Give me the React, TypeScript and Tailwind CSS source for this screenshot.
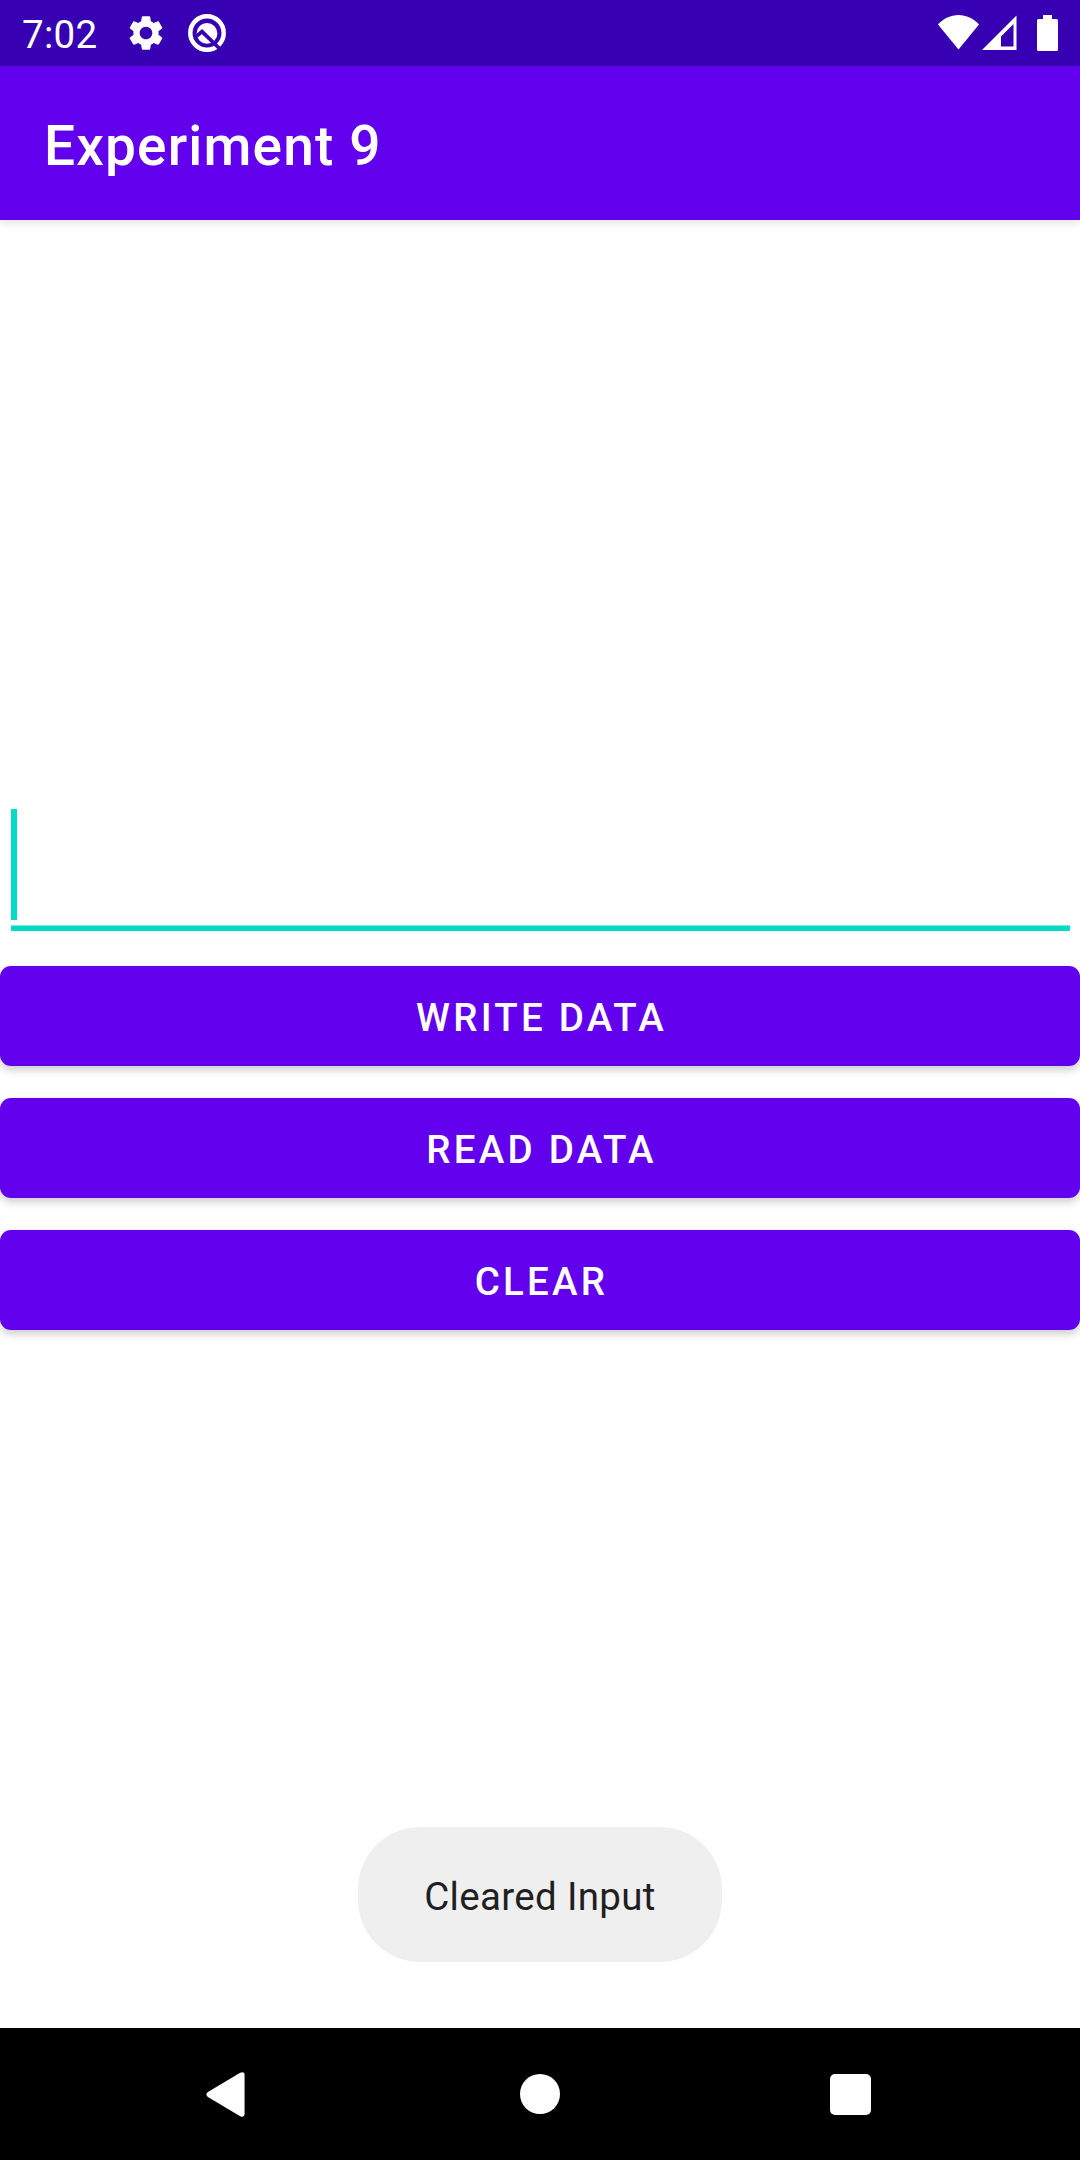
import React from "react";
import { MdSettings } from "react-icons/md";

function StatusBar() {
  return (
    <header className="flex h-[66px] shrink-0 items-center bg-[#3700b3] text-white">
      <span className="mt-[3px] ml-[22px] w-[103px] text-[38.5px] leading-[45px] tracking-[0.3px]">7:02</span>
      <MdSettings className="h-[42px] w-[42px]" />
      <svg className="ml-[21px] h-[38px] w-[38px]" viewBox="0 0 38 38" fill="none">
        <circle cx="19" cy="19" r="16.7" stroke="white" strokeWidth="4.5" />
        <circle cx="19" cy="19.400" r="10.4" fill="white" />
        <path d="M8 22.600 14 17.600 32.500 35.500" stroke="#3700b3" strokeWidth="3.700" />
      </svg>
      <div className="mr-[22px] ml-auto flex items-center">
        <svg className="h-9 w-[41px]" viewBox="0 0 41 36" fill="white">
          <path d="M0 9.500C5.500 3.500 12.800 0 20.500 0S35.500 3.500 41 9.500L20.500 34.500Z" />
        </svg>
        <svg className="ml-[3px] h-9 w-[35px]" viewBox="0 0 35 36" fill="white">
          <path fillRule="evenodd" d="M34.500 .5v34.500H0ZM31.500 9 19 21.500V31.500h12.500Z" />
        </svg>
        <svg className="ml-5 h-9 w-[21px]" viewBox="0 0 21 36" fill="white">
          <path d="M6 0h9v4h4.500A1.500 1.500 0 0 1 21 5.500v29a1.500 1.500 0 0 1-1.500 1.500h-18A1.500 1.500 0 0 1 0 34.500v-29A1.500 1.500 0 0 1 1.500 4H6Z" />
        </svg>
      </div>
    </header>
  );
}

function ActionButton({ label }: { label: string }) {
  return (
    <button className="flex h-[100px] w-full items-center justify-center rounded-[11px] bg-[#6200ee] pt-[2px] pl-[3px] text-[38.5px] leading-[45px] font-medium tracking-[3.25px] text-white shadow-[0_4px_8px_rgba(0,0,0,0.2)]">
      {label}
    </button>
  );
}

export default function App() {
  return (
    <div className="flex h-[2160px] w-[1080px] flex-col overflow-hidden bg-white font-['Roboto',sans-serif]">
      <StatusBar />
      <div className="z-10 flex h-[154px] shrink-0 items-center bg-[#6200ee] px-[44px] shadow-[0_2px_9px_rgba(0,0,0,0.14)]">
        <h1 className="mt-[5px] text-[55px] leading-[64px] font-medium tracking-[1.15px] text-white">Experiment 9</h1>
      </div>
      <main className="flex flex-1 flex-col">
        <div className="mt-[589px] mr-[10px] ml-[11px] flex h-[122px] flex-col">
          <div className="h-[111px] w-[6px] bg-[#03dac5]" />
          <div className="mt-auto h-[6px] border-t border-[#7bebe0] bg-[#03dac5]" />
        </div>
        <div className="mt-[35px] flex flex-col gap-8">
          <ActionButton label="WRITE DATA" />
          <ActionButton label="READ DATA" />
          <ActionButton label="CLEAR" />
        </div>
        <div className="mt-auto mb-[66px] flex h-[135px] w-[364px] items-center justify-center self-center rounded-[62px] bg-[#efefef]">
          <span className="mt-[3px] text-[38.5px] leading-[45px] tracking-[0.33px] text-[#1f1f1f]">Cleared Input</span>
        </div>
      </main>
      <nav className="flex h-[132px] shrink-0 items-center bg-black">
        <svg className="ml-[206px] h-[45px] w-[39px]" viewBox="0 0 39 46" fill="white">
          <path d="M1.500 20.500 34.500.800Q39-1 39 3V43Q39 47 34.500 45.200L1.500 25.500Q-1.500 23 1.500 20.500Z" />
        </svg>
        <div className="ml-[275px] h-10 w-10 rounded-full bg-white" />
        <div className="mt-[1px] ml-[270px] h-[41px] w-[41px] rounded-[5px] bg-white" />
      </nav>
    </div>
  );
}
